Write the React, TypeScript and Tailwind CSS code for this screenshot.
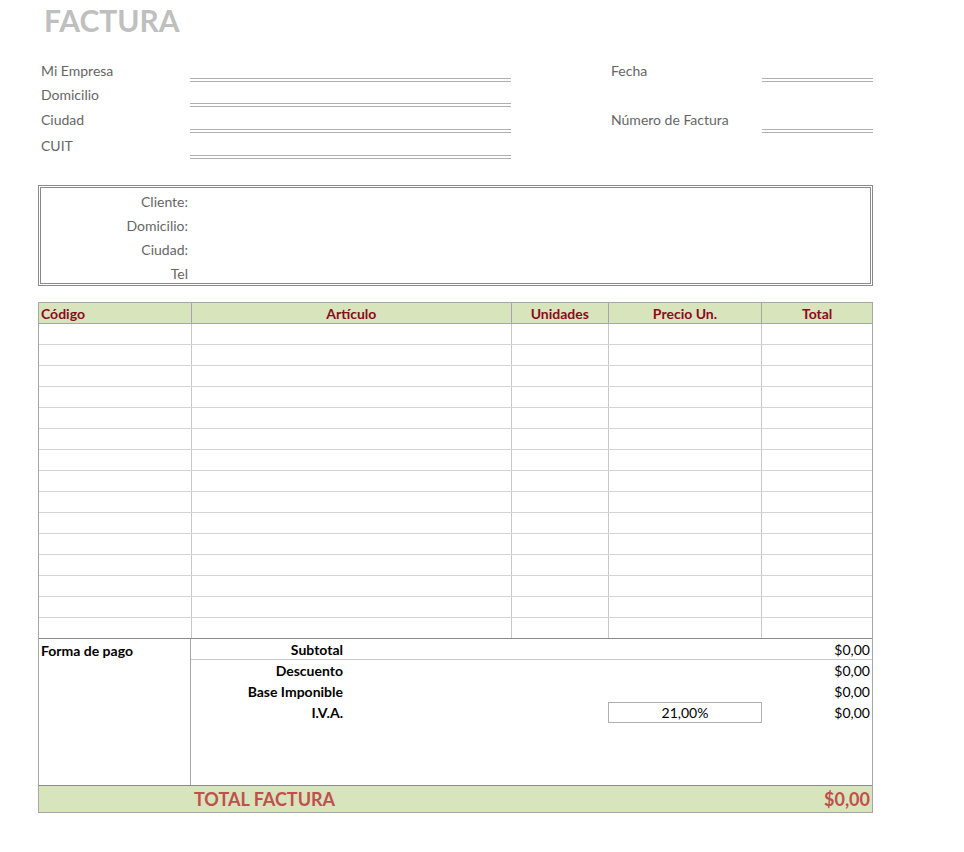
import React from 'react';

const cols = ['w-[152px]', 'w-[321px]', 'w-[97px]', 'w-[154px]', 'w-[111px]'];

const Line: React.FC<{ w: string }> = ({ w }) => (
  <div className={`${w} h-[4px] border-t border-b border-[#b0b0b0]`} />
);

const App: React.FC = () => {
  const rows = Array.from({ length: 15 });
  return (
    <div className="w-[964px] h-[852px] bg-white text-[14px] text-[#666]" style={{ fontFamily: 'Lato, "Open Sans", sans-serif' }}>
      <div className="pl-[44px] pt-[2px] h-[60px] text-[30px] font-bold text-[#bfbfbf] leading-[36px]">FACTURA</div>

      {/* empresa */}
      <div className="flex pl-[41px]">
        <div className="w-[570px]">
          {['Mi Empresa', 'Domicilio', 'Ciudad', 'CUIT'].map((l, i) => (
            <div key={l} className={`flex items-end ${i === 0 ? 'h-[22px]' : i === 1 ? 'h-[25px]' : 'h-[26px]'}`}>
              <span className="w-[149px] leading-[20px] self-center">{l}</span>
              <Line w="w-[321px]" />
            </div>
          ))}
        </div>
        <div className="w-[262px]">
          {['Fecha', '', 'Número de Factura', ''].map((l, i) => (
            <div key={i} className={`flex items-end ${i === 0 ? 'h-[22px]' : i === 1 ? 'h-[25px]' : 'h-[26px]'}`}>
              <span className="w-[151px] leading-[20px] self-center">{l}</span>
              {l && <Line w="w-[111px]" />}
            </div>
          ))}
        </div>
      </div>

      {/* cliente */}
      <div className="ml-[38px] mt-[26px] w-[835px] h-[101px] border-[3px] border-double border-[#8a8a8a] pt-[2px]">
        {['Cliente:', 'Domicilio:', 'Ciudad:', 'Tel'].map(l => (
          <div key={l} className="w-[147px] text-right h-[24px] leading-[24px]">{l}</div>
        ))}
      </div>

      {/* tabla */}
      <div className="ml-[38px] mt-[16px] w-[835px] border border-[#a6a6a6] text-black">
        <div className="flex h-[21px] bg-[#d8e4bc] font-bold text-[#8b0a1e] leading-[21px] border-b border-[#a6a6a6]">
          {['Código', 'Artículo', 'Unidades', 'Precio Un.', 'Total'].map((h, i) => (
            <div key={h} className={`${cols[i]} ${i === 0 ? 'pl-[2px]' : 'text-center border-l border-[#a6a6a6]'}`}>{h}</div>
          ))}
        </div>
        {rows.map((_, r) => (
          <div key={r} className={`flex h-[21px] ${r < 14 ? 'border-b border-[#d4d4d4]' : 'border-b border-[#8a8a8a]'}`}>
            {cols.map((c, i) => (
              <div key={i} className={`${c} ${i > 0 ? 'border-l border-[#c8c8c8]' : ''}`} />
            ))}
          </div>
        ))}
        <div className="flex h-[146px]">
          <div className="w-[151px] pl-[2px] pt-[2px] font-bold leading-[20px]">Forma de pago</div>
          <div className="flex-1 border-l border-[#a6a6a6]">
            {[
              ['Subtotal', false],
              ['Descuento', false],
              ['Base Imponible', false],
              ['I.V.A.', true],
            ].map(([l, iva], i) => (
              <div key={l as string} className={`flex h-[21px] items-center ${i === 0 ? 'border-b border-[#c8c8c8]' : ''}`}>
                <div className="w-[152px] text-right font-bold">{l}</div>
                <div className="w-[265px]" />
                <div className="w-[154px] h-[21px]">
                  {iva && <div className="h-[21px] border border-[#b0b0b0] text-center leading-[19px]">21,00%</div>}
                </div>
                <div className="flex-1 text-right pr-[2px]">$0,00</div>
              </div>
            ))}
          </div>
        </div>
        <div className="flex h-[27px] bg-[#d8e4bc] border-t border-[#8a8a8a] text-[#c0504d] font-bold text-[18px] leading-[27px]">
          <div className="w-[155px]" />
          <div className="flex-1">TOTAL FACTURA</div>
          <div className="pr-[2px]">$0,00</div>
        </div>
      </div>
    </div>
  );
};

export default App;
